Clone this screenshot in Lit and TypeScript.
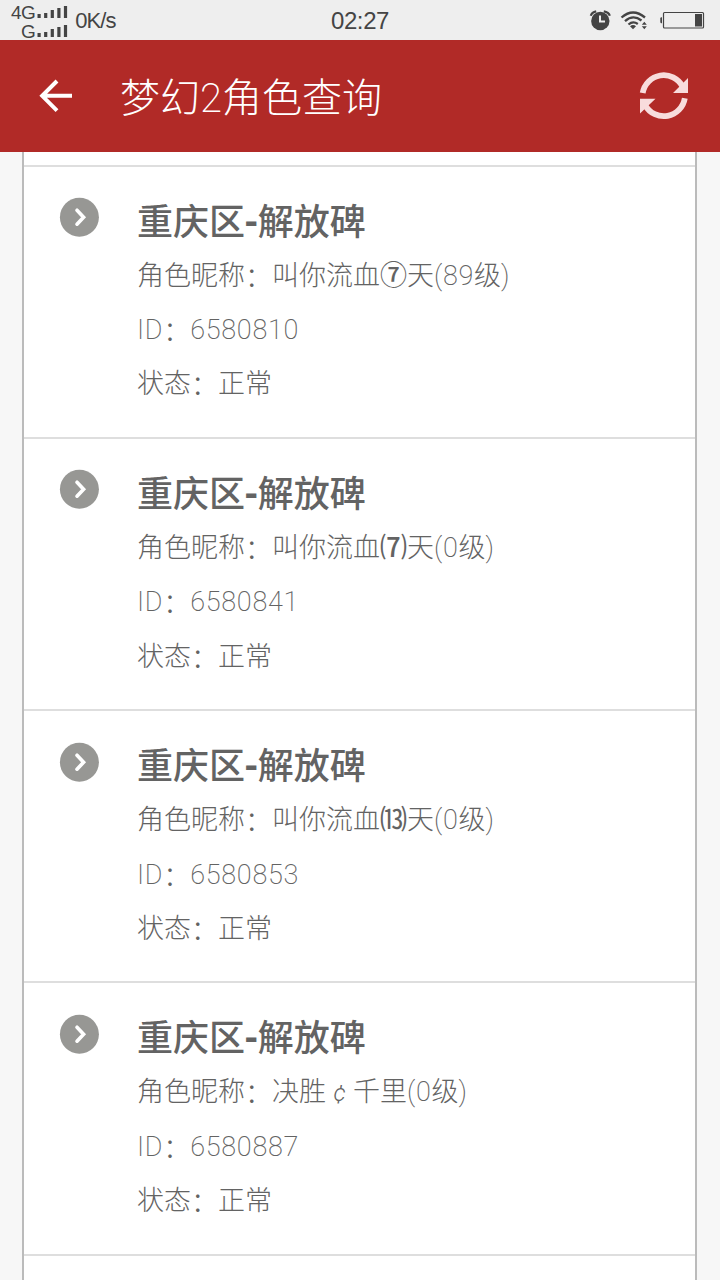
import { LitElement, html, css, svg } from "lit";
import { customElement, property } from "lit/decorators.js";

interface Role {
  area: [string, string];
  name: unknown;
  level: number;
  id: string;
}

const mark = (s: string) => html`<span class="mark">${s}</span>`;

const ROLES: Role[] = [
  { area: ["重庆区", "解放碑"], name: html`叫你流血${mark("⑦")}天`, level: 89, id: "6580810" },
  { area: ["重庆区", "解放碑"], name: html`叫你流血${mark("⑺")}天`, level: 0, id: "6580841" },
  { area: ["重庆区", "解放碑"], name: html`叫你流血${mark("⒀")}天`, level: 0, id: "6580853" },
  { area: ["重庆区", "解放碑"], name: html`决胜<span class="cent">¢</span>千里`, level: 0, id: "6580887" },
];

const bars = [4, 5, 8, 10, 12];

@customElement("status-bar")
class StatusBar extends LitElement {
  static styles = css`
    :host {
      display: grid;
      grid-template-columns: 1fr auto 1fr;
      align-items: center;
      height: 40px;
      background: #eee;
      color: #444;
      font-family: "Liberation Sans", sans-serif;
    }
    .left { display: flex; align-items: center; padding-left: 11px; gap: 7px; }
    .nets { display: flex; flex-direction: column; align-items: flex-end; padding-top: 2px; }
    .net { display: flex; align-items: center; font-size: 19px; line-height: 19px; height: 19px; gap: 2px; letter-spacing: -0.6px; }
    .net svg { display: block; }
    .speed { font-size: 22px; letter-spacing: -0.9px; }
    .time { font-size: 24px; letter-spacing: -0.4px; line-height: 40px; padding-top: 1px; }
    .right { display: flex; justify-content: flex-end; padding-right: 15px; }
    .right svg { display: block; }
  `;
  private signal() {
    return html`<svg width="31" height="14" viewBox="0 0 31 14" fill="#444">
      ${bars.map((h, i) => svg`<rect x=${0.5 + i * 6.6} y=${13 - h} width="3.2" height=${h} />`)}
    </svg>`;
  }
  render() {
    return html`
      <div class="left">
        <div class="nets">
          <div class="net"><span>4G</span>${this.signal()}</div>
          <div class="net"><span>G</span>${this.signal()}</div>
        </div>
        <span class="speed">0K/s</span>
      </div>
      <span class="time">02:27</span>
      <div class="right">
        <svg width="117" height="24" viewBox="588 8 117 24" fill="none" stroke="#444">
          <circle cx="600.3" cy="20" r="9.2" fill="#444" stroke="none" />
          <path d="M600 14.5V20.5H605" stroke="#eee" stroke-width="2" />
          <path d="M590.8 14.8Q591.8 11 596.2 10.3M603.8 10.3Q608.8 11 609.8 14.8" stroke-width="2.2" />
          <path d="M621.5 16.5Q633 6.5 645 16.5M625 20.2Q633 13 641.5 19.5M628.5 23.5Q633 19.5 637.8 23" stroke-width="2.3" />
          <path d="M630 25.2Q633 22.8 636 25.2L633 28.2Z" fill="#444" stroke="none" />
          <path d="M641.8 23.7L644.3 20.7L646.8 23.7ZM641.8 25.3L644.3 28.3L646.8 25.3Z" fill="#444" stroke="none" />
          <rect x="663.5" y="11.5" width="40" height="15.5" rx="1" stroke-width="1.2" />
          <rect x="695" y="13" width="7" height="12.5" fill="#444" stroke="none" />
          <path d="M662 16.2H661.5Q660.3 16.2 660.3 17.5V21Q660.3 22.3 661.5 22.3H662Z" fill="#444" stroke="none" />
        </svg>
      </div>
    `;
  }
}

@customElement("title-bar")
class TitleBar extends LitElement {
  static styles = css`
    :host {
      display: flex;
      align-items: center;
      height: 112px;
      box-sizing: border-box;
      padding: 0 31px 0 39px;
      background: #b12a27;
      color: #fff;
    }
    svg { display: block; flex: none; }
    .title {
      flex: 1;
      padding-top: 6px;
      margin-left: 48px;
      font: 300 40px/60px Roboto, "Noto Sans CJK SC", sans-serif;
      white-space: nowrap;
    }
    .digit { font-weight: 200; }
  `;
  render() {
    return html`
      <svg width="33" height="34" viewBox="39 79 33 34" fill="none" stroke="#fff" stroke-width="4">
        <path d="M72 95.8H42M57 81L42.2 95.8L57 110.6" />
      </svg>
      <div class="title">梦幻<span class="digit">2</span>角色查询</div>
      <svg width="50" height="50" viewBox="639 71 50 50">
        <g fill="none" stroke="#f8dcdc" stroke-width="5.8">
          <path d="M642.7 93A21.3 21.3 0 0 1 682.5 86.5" />
          <path d="M684.8 98.3A21.3 21.3 0 0 1 645.3 105.5" />
        </g>
        <path d="M688 78V93H673ZM640 98.8H655.5L640 113.5Z" fill="#f8dcdc" />
      </svg>
    `;
  }
}

@customElement("role-row")
class RoleRow extends LitElement {
  @property({ attribute: false }) info!: Role;
  static styles = css`
    :host {
      display: flex;
      align-items: flex-start;
      box-sizing: border-box;
      height: 272.25px;
      padding: 26px 0 0 35px;
      border-bottom: 2px solid #dedede;
      color: #636363;
      font-family: Roboto, "Noto Sans CJK SC", sans-serif;
      background: #fff;
    }
    .go { display: block; flex: none; margin-top: 4.5px; }
    .info { margin-left: 38px; padding-top: 3px; white-space: nowrap; }
    .area { font-size: 36px; font-weight: 500; line-height: 54px; height: 53.2px; }
    .dash { font-weight: 800; margin: 0 -1.2px; }
    .line { font-size: 27px; font-weight: 300; line-height: 54.4px; height: 54.4px; }
    .num { font-weight: 200; letter-spacing: 0.7px; }
    .mark { font-weight: 500; }
    .colon { line-height: 0; vertical-align: -2px; }
    .cent { display: inline-block; width: 27px; text-align: center; font-style: italic; font-size: 24px; line-height: 1; }
  `;
  private label(text: string) {
    return html`${text}<span class="colon">：</span>`;
  }
  render() {
    const r = this.info;
    return html`
      <svg class="go" width="40" height="40" viewBox="0 0 40 40">
        <circle cx="20.4" cy="20.2" r="19.5" fill="#979794" />
        <path d="M18 13.2L24.6 20.2L18 27.2" fill="none" stroke="#fff" stroke-width="3.6" stroke-linecap="round" />
      </svg>
      <div class="info">
        <div class="area">${r.area[0]}<span class="dash">-</span>${r.area[1]}</div>
        <div class="line">${this.label("角色昵称")}${r.name}<span class="num">(${r.level}</span>级<span class="num">)</span></div>
        <div class="line"><span class="num">ID</span>${this.label("")}<span class="num">${r.id}</span></div>
        <div class="line">${this.label("状态")}正常</div>
      </div>
    `;
  }
}

@customElement("app-root")
class AppRoot extends LitElement {
  static styles = css`
    :host {
      display: flex;
      flex-direction: column;
      width: 720px;
      height: 1280px;
      overflow: hidden;
      background: #f7f7f7;
    }
    status-bar, title-bar { flex: none; }
    .list {
      flex: 1;
      min-height: 0;
      margin: 0 23px 0 22px;
      overflow: hidden;
      border: solid #bbb;
      border-width: 0 2px;
      background: #fff;
    }
    .previous { height: 12.5px; border-bottom: 2px solid #dedede; }
  `;
  render() {
    return html`
      <status-bar></status-bar>
      <title-bar></title-bar>
      <div class="list">
        <div class="previous"></div>
        ${ROLES.map((r) => html`<role-row .info=${r}></role-row>`)}
      </div>
    `;
  }
}
